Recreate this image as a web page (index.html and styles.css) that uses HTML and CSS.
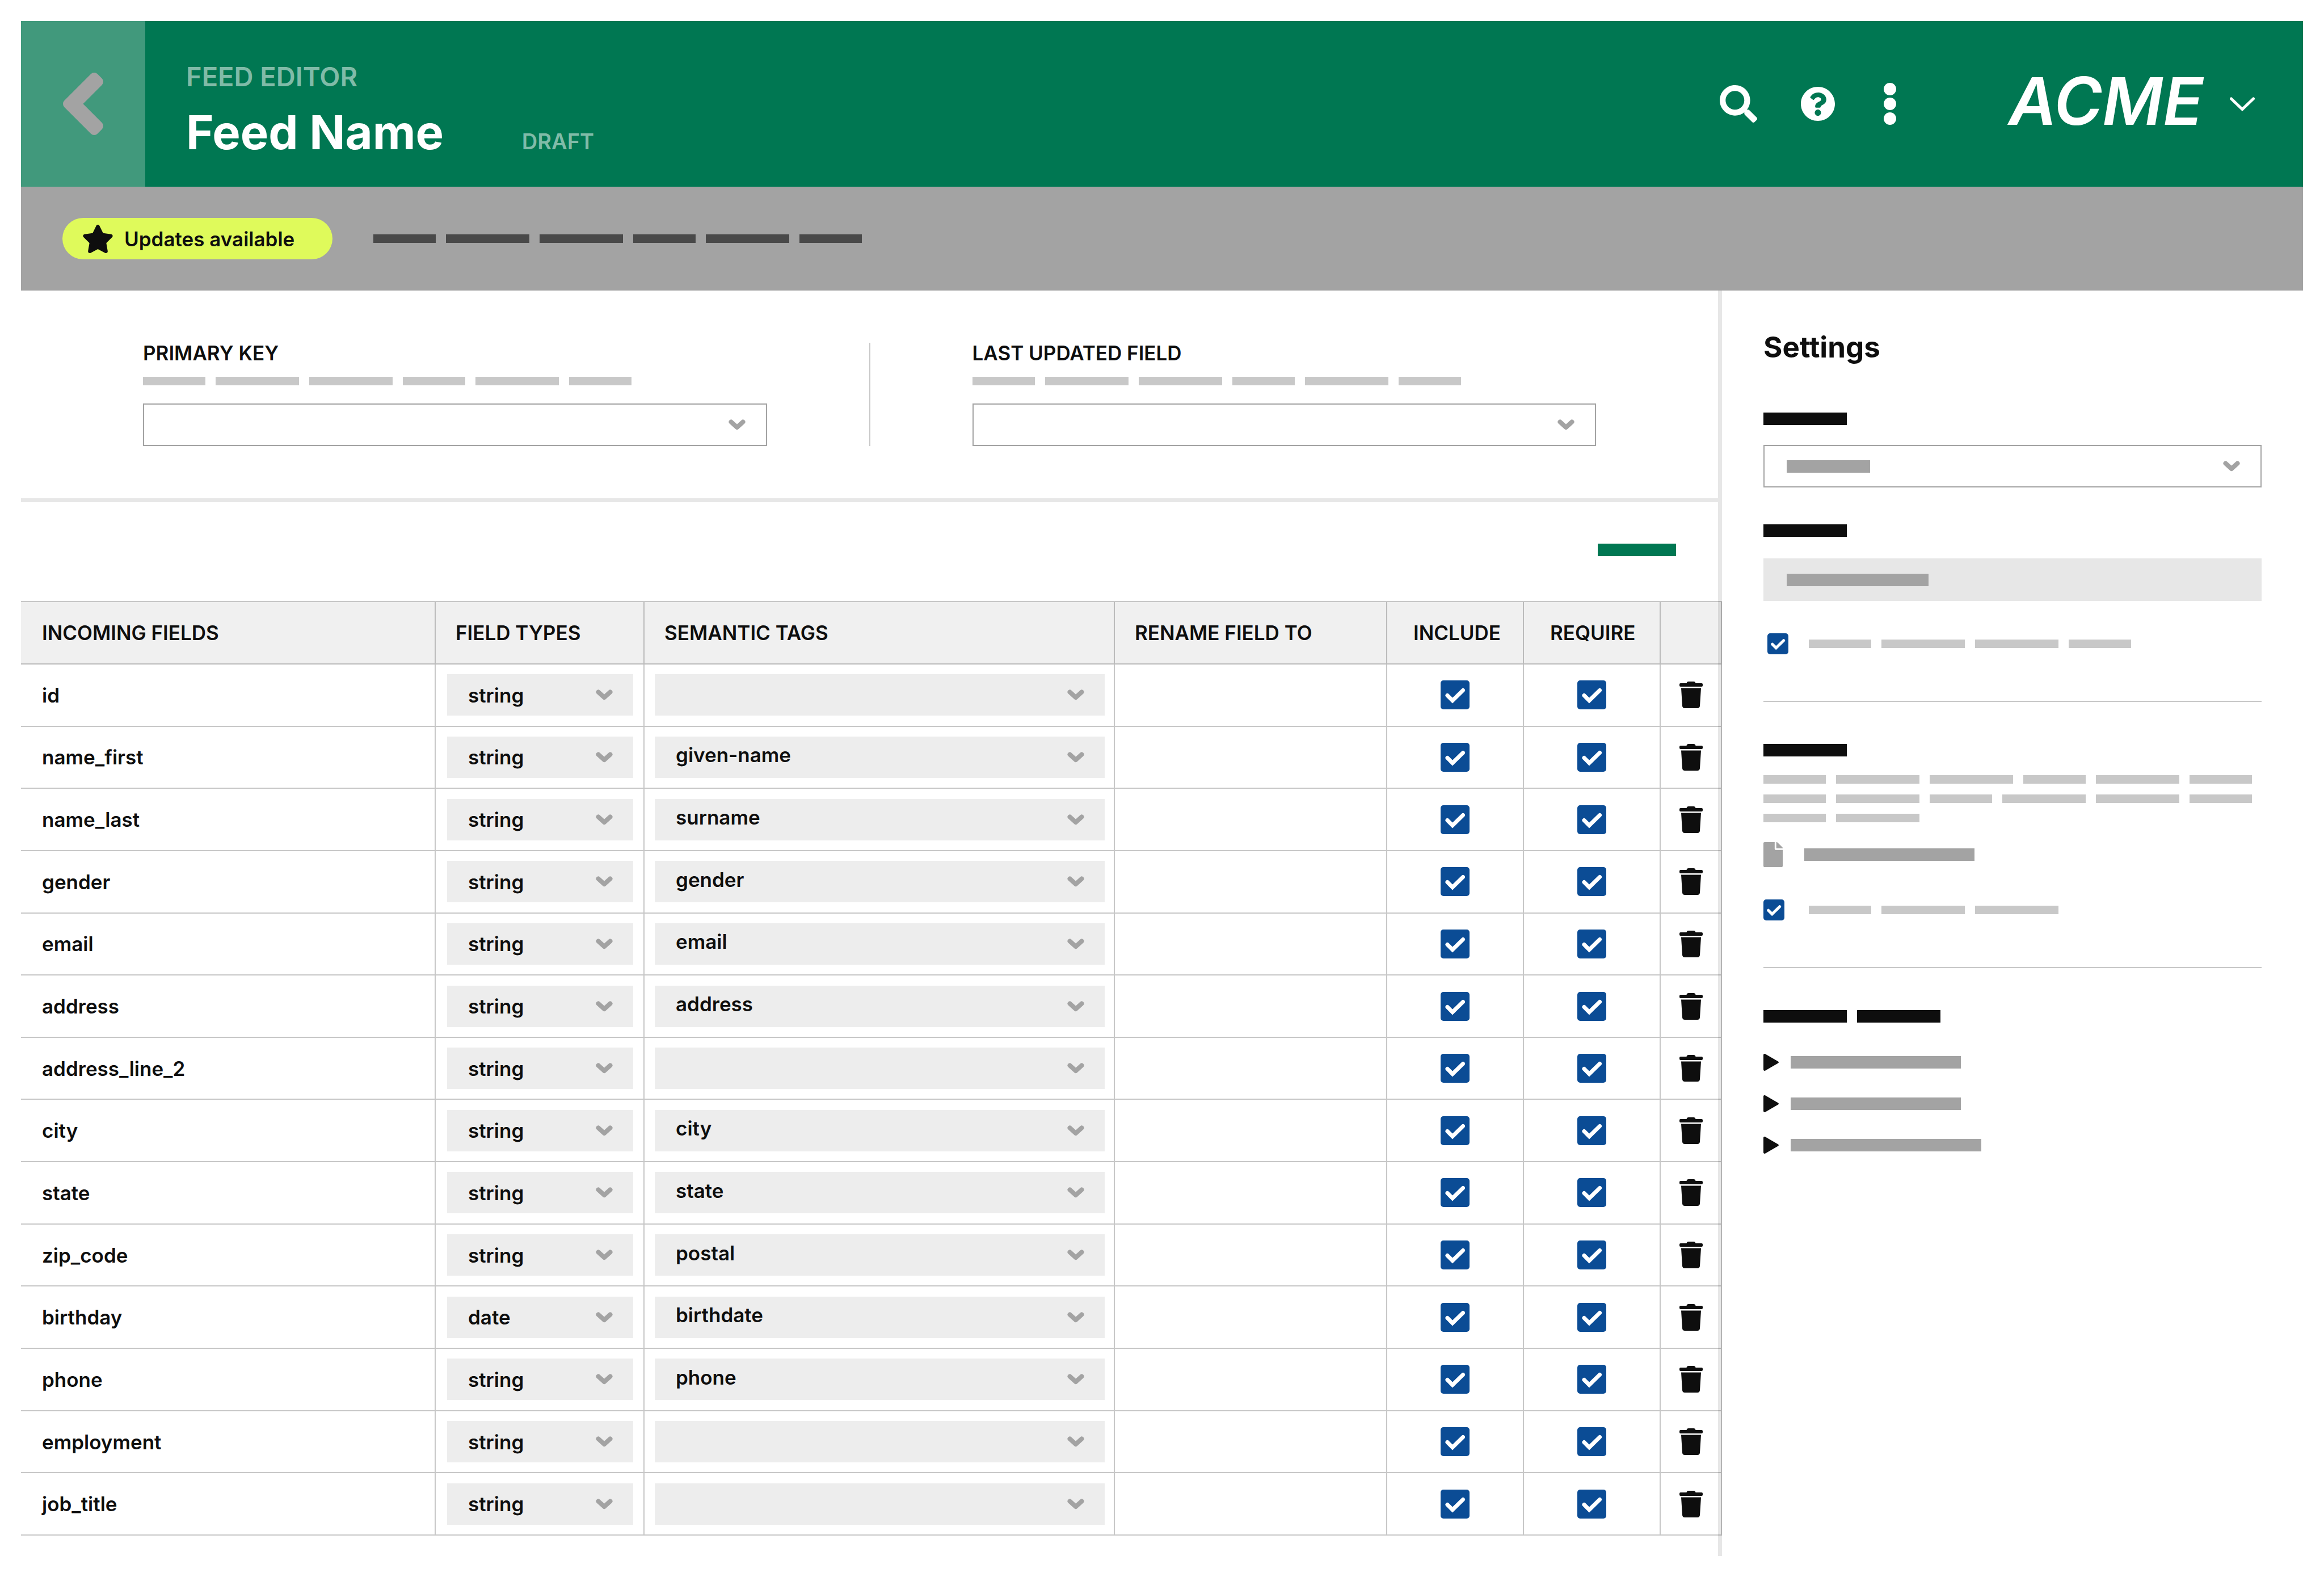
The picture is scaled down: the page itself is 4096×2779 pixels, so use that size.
FILE: index.html
```html
<!DOCTYPE html>
<html lang="en">
<head>
<meta charset="utf-8">
<meta name="viewport" content="width=device-width, initial-scale=1">
<title>Feed Name</title>
<link rel="stylesheet" href="styles.css">
</head>
<body>
<svg class="sprite" aria-hidden="true">
  <symbol id="trash" viewBox="0 0 41 47"><path d="M2 3h10.500C13 1 14 0 16 0h9c2 0 3 1 3.500 3H39a2 2 0 0 1 2 2v2a2 2 0 0 1-2 2H2a2 2 0 0 1-2-2V5a2 2 0 0 1 2-2zM3 11.500h35l-2 31.500a4.500 4.500 0 0 1-4.500 4h-22A4.500 4.500 0 0 1 5 43z"/></symbol>
  <symbol id="play" viewBox="0 0 27 30"><path d="M0 2.500C0 .3 1.800-.5 3.500.6l22 12.600c1.900 1.100 1.900 2.500 0 3.600l-22 12.600C1.800 30.500 0 29.700 0 27.500z"/></symbol>
</svg>
<div class="page">
  <header class="topbar">
    <button class="back" aria-label="Back">
      <svg width="71" height="110" viewBox="0 0 71 110"><path d="M55 8l8 8-39 39 39 39-8 8L8 55z" fill="currentColor" stroke="currentColor" stroke-width="16" stroke-linejoin="round"/></svg>
    </button>
    <div class="titles">
      <p class="eyebrow">FEED EDITOR</p>
      <div class="title-row"><h1>Feed Name</h1><span class="status">DRAFT</span></div>
    </div>
    <nav class="actions" aria-label="Tools">
      <button class="icon-btn" aria-label="Search">
        <svg width="66" height="66" viewBox="0 0 512 512"><path fill="currentColor" d="M505 442.700 405.300 343c-4.500-4.500-10.600-7-17-7H372c27.600-35.300 44-79.700 44-128C416 93.100 322.900 0 208 0S0 93.100 0 208s93.100 208 208 208c48.300 0 92.700-16.400 128-44v16.300c0 6.400 2.500 12.500 7 17l99.700 99.700c9.400 9.400 24.600 9.400 33.900 0l28.300-28.300c9.400-9.400 9.400-24.600.1-34zM208 336c-70.700 0-128-57.200-128-128 0-70.700 57.200-128 128-128 70.700 0 128 57.200 128 128 0 70.700-57.200 128-128 128z"/></svg>
      </button>
      <button class="icon-btn" aria-label="Help">
        <svg width="60" height="60" viewBox="8 8 496 496"><path fill="currentColor" d="M504 256c0 136.997-111.043 248-248 248S8 392.997 8 256C8 119.083 119.043 8 256 8s248 111.083 248 248zM262.655 90c-54.497 0-89.255 22.957-116.549 63.758-3.536 5.286-2.353 12.415 2.715 16.258l34.699 26.310c5.205 3.947 12.621 3.008 16.665-2.122 17.864-22.658 30.113-35.797 57.303-35.797 20.429 0 45.698 13.148 45.698 32.958 0 14.976-12.363 22.667-32.534 33.976C247.128 238.528 216 254.941 216 296v4c0 6.627 5.373 12 12 12h56c6.627 0 12-5.373 12-12v-1.333c0-28.462 83.186-29.647 83.186-106.667 0-58.002-60.165-102-116.531-102zM256 338c-25.365 0-46 20.635-46 46 0 25.364 20.635 46 46 46s46-20.636 46-46c0-25.365-20.635-46-46-46z"/></svg>
      </button>
      <button class="icon-btn" aria-label="More">
        <svg width="22" height="74" viewBox="0 0 22 74" fill="currentColor"><circle cx="11" cy="11" r="11"/><circle cx="11" cy="37" r="11"/><circle cx="11" cy="63" r="11"/></svg>
      </button>
    </nav>
    <button class="account">
      <span class="brand">ACME</span>
      <svg width="44" height="25" viewBox="0 0 44 25"><path d="m2.500 3 19.500 18.500L41.500 3" fill="none" stroke="currentColor" stroke-width="5" stroke-linecap="round"/></svg>
    </button>
  </header>

  <div class="notice">
    <button class="pill">
      <svg width="53" height="50" viewBox="20 0 536 512"><path fill="currentColor" d="M259.300 17.800 194 150.200 47.900 171.500c-26.200 3.800-36.700 36.100-17.700 54.600l105.700 103-25 145.500c-4.500 26.300 23.200 46 46.400 33.700L288 439.600l130.700 68.700c23.200 12.200 50.900-7.400 46.400-33.700l-25-145.500 105.700-103c19-18.500 8.500-50.800-17.700-54.600L382 150.200 316.700 17.800c-11.700-23.600-45.600-23.900-57.400 0z"/></svg>
      Updates available
    </button>
    <div class="words words-dark"><i class="w1"></i><i class="w2"></i><i class="w2"></i><i class="w1"></i><i class="w2"></i><i class="w1"></i></div>
  </div>

  <div class="content">
    <main class="main">
      <section class="keys">
        <div class="key">
          <label for="primary-key">PRIMARY KEY</label>
          <div class="words"><i class="w1"></i><i class="w2"></i><i class="w2"></i><i class="w1"></i><i class="w2"></i><i class="w1"></i></div>
          <select id="primary-key" class="select outlined"><option></option></select>
        </div>
        <div class="rule-v"></div>
        <div class="key">
          <label for="last-updated">LAST UPDATED FIELD</label>
          <div class="words"><i class="w1"></i><i class="w2"></i><i class="w2"></i><i class="w1"></i><i class="w2"></i><i class="w1"></i></div>
          <select id="last-updated" class="select outlined"><option></option></select>
        </div>
      </section>
      <div class="toolbar"><button class="add" aria-label="Add field"></button></div>
      <table class="fields">
        <colgroup><col class="c-name"><col class="c-type"><col><col class="c-rename"><col class="c-check"><col class="c-check"><col class="c-del"></colgroup>
        <thead>
          <tr><th>INCOMING FIELDS</th><th>FIELD TYPES</th><th>SEMANTIC TAGS</th><th>RENAME FIELD TO</th><th class="inset">INCLUDE</th><th class="inset">REQUIRE</th><th></th></tr>
        </thead>
        <tbody>
          <tr><td>id</td><td class="pick"><select class="select" aria-label="Type"><option>string</option></select></td><td class="pick"><select class="select tag" aria-label="Tag"><option></option></select></td><td></td><td class="mid"><input type="checkbox" class="check" aria-label="Include" checked></td><td class="mid"><input type="checkbox" class="check" aria-label="Require" checked></td><td class="mid"><button class="del" aria-label="Delete"><svg><use href="#trash"/></svg></button></td></tr>
          <tr><td>name_first</td><td class="pick"><select class="select" aria-label="Type"><option>string</option></select></td><td class="pick"><select class="select tag" aria-label="Tag"><option>given-name</option></select></td><td></td><td class="mid"><input type="checkbox" class="check" aria-label="Include" checked></td><td class="mid"><input type="checkbox" class="check" aria-label="Require" checked></td><td class="mid"><button class="del" aria-label="Delete"><svg><use href="#trash"/></svg></button></td></tr>
          <tr><td>name_last</td><td class="pick"><select class="select" aria-label="Type"><option>string</option></select></td><td class="pick"><select class="select tag" aria-label="Tag"><option>surname</option></select></td><td></td><td class="mid"><input type="checkbox" class="check" aria-label="Include" checked></td><td class="mid"><input type="checkbox" class="check" aria-label="Require" checked></td><td class="mid"><button class="del" aria-label="Delete"><svg><use href="#trash"/></svg></button></td></tr>
          <tr><td>gender</td><td class="pick"><select class="select" aria-label="Type"><option>string</option></select></td><td class="pick"><select class="select tag" aria-label="Tag"><option>gender</option></select></td><td></td><td class="mid"><input type="checkbox" class="check" aria-label="Include" checked></td><td class="mid"><input type="checkbox" class="check" aria-label="Require" checked></td><td class="mid"><button class="del" aria-label="Delete"><svg><use href="#trash"/></svg></button></td></tr>
          <tr><td>email</td><td class="pick"><select class="select" aria-label="Type"><option>string</option></select></td><td class="pick"><select class="select tag" aria-label="Tag"><option>email</option></select></td><td></td><td class="mid"><input type="checkbox" class="check" aria-label="Include" checked></td><td class="mid"><input type="checkbox" class="check" aria-label="Require" checked></td><td class="mid"><button class="del" aria-label="Delete"><svg><use href="#trash"/></svg></button></td></tr>
          <tr><td>address</td><td class="pick"><select class="select" aria-label="Type"><option>string</option></select></td><td class="pick"><select class="select tag" aria-label="Tag"><option>address</option></select></td><td></td><td class="mid"><input type="checkbox" class="check" aria-label="Include" checked></td><td class="mid"><input type="checkbox" class="check" aria-label="Require" checked></td><td class="mid"><button class="del" aria-label="Delete"><svg><use href="#trash"/></svg></button></td></tr>
          <tr><td>address_line_2</td><td class="pick"><select class="select" aria-label="Type"><option>string</option></select></td><td class="pick"><select class="select tag" aria-label="Tag"><option></option></select></td><td></td><td class="mid"><input type="checkbox" class="check" aria-label="Include" checked></td><td class="mid"><input type="checkbox" class="check" aria-label="Require" checked></td><td class="mid"><button class="del" aria-label="Delete"><svg><use href="#trash"/></svg></button></td></tr>
          <tr><td>city</td><td class="pick"><select class="select" aria-label="Type"><option>string</option></select></td><td class="pick"><select class="select tag" aria-label="Tag"><option>city</option></select></td><td></td><td class="mid"><input type="checkbox" class="check" aria-label="Include" checked></td><td class="mid"><input type="checkbox" class="check" aria-label="Require" checked></td><td class="mid"><button class="del" aria-label="Delete"><svg><use href="#trash"/></svg></button></td></tr>
          <tr><td>state</td><td class="pick"><select class="select" aria-label="Type"><option>string</option></select></td><td class="pick"><select class="select tag" aria-label="Tag"><option>state</option></select></td><td></td><td class="mid"><input type="checkbox" class="check" aria-label="Include" checked></td><td class="mid"><input type="checkbox" class="check" aria-label="Require" checked></td><td class="mid"><button class="del" aria-label="Delete"><svg><use href="#trash"/></svg></button></td></tr>
          <tr><td>zip_code</td><td class="pick"><select class="select" aria-label="Type"><option>string</option></select></td><td class="pick"><select class="select tag" aria-label="Tag"><option>postal</option></select></td><td></td><td class="mid"><input type="checkbox" class="check" aria-label="Include" checked></td><td class="mid"><input type="checkbox" class="check" aria-label="Require" checked></td><td class="mid"><button class="del" aria-label="Delete"><svg><use href="#trash"/></svg></button></td></tr>
          <tr><td>birthday</td><td class="pick"><select class="select" aria-label="Type"><option>date</option></select></td><td class="pick"><select class="select tag" aria-label="Tag"><option>birthdate</option></select></td><td></td><td class="mid"><input type="checkbox" class="check" aria-label="Include" checked></td><td class="mid"><input type="checkbox" class="check" aria-label="Require" checked></td><td class="mid"><button class="del" aria-label="Delete"><svg><use href="#trash"/></svg></button></td></tr>
          <tr><td>phone</td><td class="pick"><select class="select" aria-label="Type"><option>string</option></select></td><td class="pick"><select class="select tag" aria-label="Tag"><option>phone</option></select></td><td></td><td class="mid"><input type="checkbox" class="check" aria-label="Include" checked></td><td class="mid"><input type="checkbox" class="check" aria-label="Require" checked></td><td class="mid"><button class="del" aria-label="Delete"><svg><use href="#trash"/></svg></button></td></tr>
          <tr><td>employment</td><td class="pick"><select class="select" aria-label="Type"><option>string</option></select></td><td class="pick"><select class="select tag" aria-label="Tag"><option></option></select></td><td></td><td class="mid"><input type="checkbox" class="check" aria-label="Include" checked></td><td class="mid"><input type="checkbox" class="check" aria-label="Require" checked></td><td class="mid"><button class="del" aria-label="Delete"><svg><use href="#trash"/></svg></button></td></tr>
          <tr><td>job_title</td><td class="pick"><select class="select" aria-label="Type"><option>string</option></select></td><td class="pick"><select class="select tag" aria-label="Tag"><option></option></select></td><td></td><td class="mid"><input type="checkbox" class="check" aria-label="Include" checked></td><td class="mid"><input type="checkbox" class="check" aria-label="Require" checked></td><td class="mid"><button class="del" aria-label="Delete"><svg><use href="#trash"/></svg></button></td></tr>
        </tbody>
      </table>
    </main>

    <aside class="settings">
      <h2>Settings</h2>
      <section class="group">
        <label class="bar heading" for="mode"></label>
        <div class="field field-first">
          <select id="mode" class="select outlined"><option></option></select>
          <span class="bar grey"></span>
        </div>
        <label class="bar heading" for="source"></label>
        <div class="field field-second">
          <input id="source" class="readonly" type="text" readonly>
          <span class="bar grey medium"></span>
        </div>
        <label class="option option-centered"><input type="checkbox" class="check small" checked><span class="words"><i class="w1"></i><i class="w2"></i><i class="w2"></i><i class="w1"></i></span></label>
      </section>
      <section class="group">
        <div class="bar heading"></div>
        <div class="copy">
          <div class="words"><i class="w1"></i><i class="w2"></i><i class="w2"></i><i class="w1"></i><i class="w2"></i><i class="w1"></i></div>
          <div class="words"><i class="w1"></i><i class="w2"></i><i class="w1"></i><i class="w2"></i><i class="w2"></i><i class="w1"></i></div>
          <div class="words"><i class="w1"></i><i class="w2"></i></div>
        </div>
        <div class="file">
          <svg width="34" height="44" viewBox="0 0 384 512" preserveAspectRatio="none"><path fill="currentColor" d="M224 136V0H24C10.700 0 0 10.700 0 24v464c0 13.300 10.700 24 24 24h336c13.300 0 24-10.700 24-24V160H248c-13.200 0-24-10.800-24-24zm160-14.100v6.100H256V0h6.100c6.400 0 12.500 2.500 17 7l97.900 98c4.500 4.500 7 10.600 7 16.900z"/></svg>
          <span class="bar grey long"></span>
        </div>
        <label class="option"><input type="checkbox" class="check small" checked><span class="words"><i class="w1"></i><i class="w2"></i><i class="w2"></i></span></label>
      </section>
      <section class="group">
        <div class="pair"><span class="bar heading"></span><span class="bar heading"></span></div>
        <ul class="toggles">
          <li><svg><use href="#play"/></svg><span class="bar grey long"></span></li>
          <li><svg><use href="#play"/></svg><span class="bar grey long"></span></li>
          <li><svg><use href="#play"/></svg><span class="bar grey longer"></span></li>
        </ul>
      </section>
    </aside>
  </div>
</div>
</body>
</html>
```
FILE: styles.css
```css
:root {
  --green: #007752;
  --ink: #0e0e0e;
  --grey: #a3a3a3;
  --light: #c8c8c8;
  --line: rgba(0, 0, 0, .22);
  --blue: #0b4c95;
}

*, *::before, *::after { box-sizing: border-box; }

body, h1, h2, p, ul { margin: 0; padding: 0; }

body {
  background: #fff;
  color: var(--ink);
  font: 600 35px/44px Inter, "Open Sans", sans-serif;
}

button, select, input {
  margin: 0;
  padding: 0;
  border: 0;
  border-radius: 0;
  background: none;
  color: inherit;
  font: inherit;
}

svg { display: block; }
.sprite { position: absolute; width: 0; height: 0; }

.page {
  display: flex;
  flex-direction: column;
  min-height: 100vh;
  padding: 37px;
}

/* Top bar */
.topbar {
  display: flex;
  align-items: center;
  min-height: 292px;
  padding-right: 85px;
  background: var(--green);
  color: #fff;
}
.back {
  display: grid;
  place-items: center;
  align-self: stretch;
  width: 219px;
  background: #41997c;
  color: var(--grey);
}
.titles {
  align-self: flex-start;
  flex: 1;
  padding: 70px 0 0 72px;
}
.eyebrow {
  margin-bottom: 26px;
  color: #80bba8;
  font-size: 47px;
  line-height: 56px;
}
.title-row { display: flex; align-items: baseline; gap: 138px; }
h1 { font-size: 83px; font-weight: 700; line-height: 88px; }
.status { color: #80bba8; font-size: 38px; }

.actions { display: flex; align-items: center; }
.icon-btn { margin-left: 77px; }
.icon-btn:last-child { margin-left: 86px; }
.account {
  display: flex;
  align-items: center;
  justify-content: flex-end;
  gap: 47px;
  min-width: 632px;
}
.brand {
  padding-bottom: 10px;
  font-size: 116px;
  font-style: italic;
  line-height: 120px;
}

/* Notice bar */
.notice {
  display: flex;
  align-items: center;
  gap: 72px;
  min-height: 183px;
  padding: 0 73px;
  background: var(--grey);
}
.pill {
  display: flex;
  align-items: center;
  gap: 20px;
  min-width: 476px;
  height: 73px;
  padding: 0 36px;
  border-radius: 37px;
  background: #dffa5b;
}

/* Placeholder copy */
.words { display: flex; gap: 18px; color: var(--light); }
.words-dark { color: #494949; }
.words i { height: 15px; background: currentColor; }
.w1 { width: 110px; }
.w2 { width: 147px; }
.bar { display: block; width: 147px; height: 22px; }
.heading { background: var(--ink); }
.grey { background: var(--grey); }
.medium { width: 250px; }
.long { width: 300px; }
.longer { width: 336px; }

/* Controls */
.select {
  display: block;
  appearance: none;
  width: 100%;
  height: 73px;
  padding: 0 80px 0 37px;
  background: #ededed url("data:image/svg+xml,%3Csvg xmlns='http://www.w3.org/2000/svg' width='30' height='19' viewBox='0 0 30 19'%3E%3Cpath d='M4.500 4.500L15 14L25.500 4.500' fill='none' stroke='%23a3a3a3' stroke-width='8' stroke-linecap='round' stroke-linejoin='round'/%3E%3C/svg%3E") no-repeat right 36px center;
}
.tag { padding-bottom: 8px; }
.outlined {
  height: 75px;
  border: 2px solid var(--grey);
  background-color: #fff;
}
.check {
  display: block;
  appearance: none;
  width: 51px;
  height: 51px;
  margin: 0 auto;
  border-radius: 5px;
}
.check:checked {
  background: var(--blue) url("data:image/svg+xml,%3Csvg xmlns='http://www.w3.org/2000/svg' viewBox='0 0 51 51'%3E%3Cpath d='M12 26.500l9 9L39.500 17.500' fill='none' stroke='%23fff' stroke-width='7' stroke-linecap='round'/%3E%3C/svg%3E") center / 100% no-repeat;
}
.small { width: 37px; height: 37px; margin: 0; }

/* Content */
.content {
  display: grid;
  flex: 1;
  grid-template-columns: 1fr 1031px;
}
.main {
  display: flex;
  flex-direction: column;
  min-width: 0;
  padding-bottom: 36px;
}
.keys {
  display: grid;
  grid-template-columns: 1fr 2px 1fr;
  gap: 180px;
  padding: 92px 215px;
  border-bottom: 7px solid #e7e7e7;
}
.key label { display: block; line-height: 36px; }
.key .words { margin: 24px 0 32px; }
.rule-v { background: var(--light); }
.toolbar {
  display: flex;
  justify-content: flex-end;
  padding: 73px 74px 79px;
}
.add { width: 138px; height: 22px; background: var(--green); }

/* The table's right edge lies over the settings divider. */
.fields {
  position: relative;
  z-index: 1;
  flex: 1;
  width: calc(100% + 7px);
  border-collapse: separate;
  border-spacing: 0;
  border-top: 2px solid var(--line);
  table-layout: fixed;
}
.c-name { width: 731px; }
.c-type { width: 368px; }
.c-rename { width: 480px; }
.c-check { width: 241px; }
.c-del { width: 108px; }
th, td {
  padding: 0 0 0 37px;
  border-right: 2px solid var(--line);
  border-bottom: 2px solid var(--line);
  font-weight: 600;
  text-align: left;
}
th { height: 110px; background: rgba(0, 0, 0, .06); }
th + th { padding-left: 35px; }
th.inset { padding-left: 46px; }
td.pick { padding: 0 18px 0 20px; }
td.pick + td.pick { padding: 0 16px 0 18px; }
td.mid { padding: 0; }
.del { display: block; margin: 0 auto; }
.del svg { width: 41px; height: 47px; fill: var(--ink); }

/* Settings */
.settings {
  padding: 70px 73px 0;
  border-left: 7px solid #e7e7e7;
}
h2 { margin-bottom: 85px; font-size: 51px; font-weight: 700; line-height: 60px; }
.group + .group {
  margin-top: 82px;
  padding-top: 74px;
  border-top: 2px solid var(--light);
}
.field { display: grid; align-items: center; }
.field > * { grid-area: 1 / 1; }
.field .bar { margin-left: 41px; pointer-events: none; }
.field-first { margin: 35px 0 65px; }
.field-second { margin: 38px 0 57px; }
.readonly { width: 100%; height: 75px; background: #e7e7e7; }
.option {
  display: grid;
  grid-template-columns: 51px 1fr;
  align-items: center;
  gap: 29px;
}
.option-centered .check { justify-self: center; }
.copy { display: grid; gap: 19px; margin: 33px 0 35px; }
.file {
  display: flex;
  align-items: center;
  gap: 38px;
  margin-bottom: 57px;
  color: var(--grey);
}
.pair { display: flex; gap: 18px; }
.toggles { display: grid; gap: 43px; margin-top: 55px; list-style: none; }
.toggles li { display: flex; align-items: center; gap: 21px; }
.toggles svg { width: 27px; height: 30px; fill: var(--ink); }
```
